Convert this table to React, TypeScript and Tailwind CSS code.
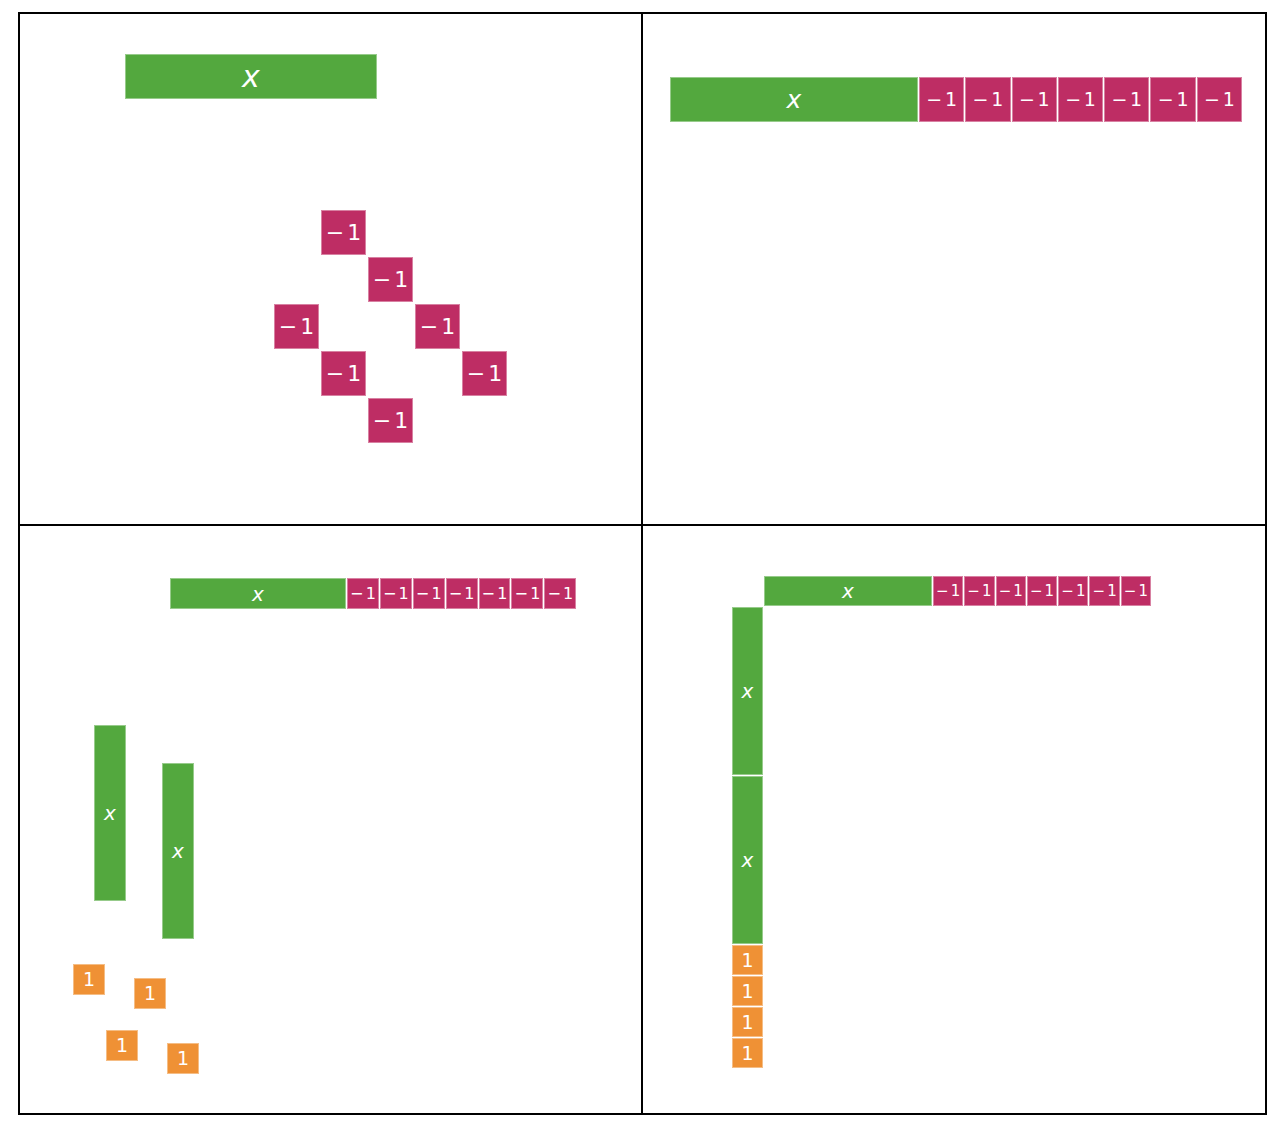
import type { ReactNode } from 'react';

const font = { fontFamily: '"DejaVu Sans", Verdana, sans-serif' };

type TileProps = {
  kind: 'x' | 'neg' | 'one';
  className?: string;
};

function Tile({ kind, className = '' }: TileProps) {
  const color =
    kind === 'x' ? 'bg-[#53a83e]' : kind === 'neg' ? 'bg-[#be2d64]' : 'bg-[#ef9135]';
  return (
    <div
      className={`${color} border border-white/40 flex items-center justify-center text-white leading-none shrink-0 ${kind === 'x' ? 'italic' : ''} ${className}`}
    >
      {kind === 'x' && 'x'}
      {kind === 'one' && '1'}
      {kind === 'neg' && (
        <>
          <span>−</span>
          <span className="ml-[0.14em]">1</span>
        </>
      )}
    </div>
  );
}

function Cell({ children, className = '' }: { children: ReactNode; className?: string }) {
  return <div className={`relative overflow-hidden ${className}`}>{children}</div>;
}

const negs = Array.from({ length: 7 });

export default function App() {
  return (
    <div className="w-[1280px] h-[1126px] bg-white pt-[12px] pl-[18px]" style={font}>
      <div className="w-[1249px] h-[1103px] border-2 border-black grid grid-cols-[623px_1fr] grid-rows-[512px_1fr]">
        {/* top left: x and seven scattered -1 */}
        <Cell className="border-r-2 border-b-2 border-black">
          <Tile kind="x" className="absolute left-[105px] top-[40px] w-[252px] h-[45px] text-[30px]" />
          {[
            [301, 196],
            [348, 243],
            [254, 290],
            [395, 290],
            [301, 337],
            [442, 337],
            [348, 384],
          ].map(([l, t], i) => (
            <div key={i} className="absolute" style={{ left: l, top: t }}>
              <Tile kind="neg" className="w-[45px] h-[45px] text-[22px]" />
            </div>
          ))}
        </Cell>

        {/* top right: x - 7 in a row */}
        <Cell className="border-b-2 border-black">
          <div className="absolute left-[27px] top-[63px] flex gap-px h-[45px]">
            <Tile kind="x" className="w-[248px] text-[25px]" />
            {negs.map((_, i) => (
              <Tile key={i} kind="neg" className="w-[45.3px] text-[19px]" />
            ))}
          </div>
        </Cell>

        {/* bottom left */}
        <Cell className="border-r-2 border-black">
          <div className="absolute left-[150px] top-[52px] flex gap-px h-[31px]">
            <Tile kind="x" className="w-[176px] text-[20px]" />
            {negs.map((_, i) => (
              <Tile key={i} kind="neg" className="w-[31.9px] text-[16px]" />
            ))}
          </div>
          <Tile kind="x" className="absolute left-[74px] top-[199px] w-[32px] h-[176px] text-[20px]" />
          <Tile kind="x" className="absolute left-[142px] top-[237px] w-[32px] h-[176px] text-[20px]" />
          <Tile kind="one" className="absolute left-[53px] top-[438px] w-[32px] h-[31px] text-[19px]" />
          <Tile kind="one" className="absolute left-[114px] top-[452px] w-[32px] h-[31px] text-[19px]" />
          <Tile kind="one" className="absolute left-[86px] top-[504px] w-[32px] h-[31px] text-[19px]" />
          <Tile kind="one" className="absolute left-[147px] top-[517px] w-[32px] h-[31px] text-[19px]" />
        </Cell>

        {/* bottom right: area model */}
        <Cell>
          <div className="absolute left-[121px] top-[50px] flex gap-px h-[30px]">
            <Tile kind="x" className="w-[168px] text-[20px]" />
            {negs.map((_, i) => (
              <Tile key={i} kind="neg" className="w-[30.3px] text-[15px]" />
            ))}
          </div>
          <div className="absolute left-[89px] top-[81px] flex flex-col gap-px w-[31px]">
            <Tile kind="x" className="h-[168px] text-[20px]" />
            <Tile kind="x" className="h-[168px] text-[20px]" />
            {[0, 1, 2, 3].map((i) => (
              <Tile key={i} kind="one" className="h-[30px] text-[19px]" />
            ))}
          </div>
        </Cell>
      </div>
    </div>
  );
}
